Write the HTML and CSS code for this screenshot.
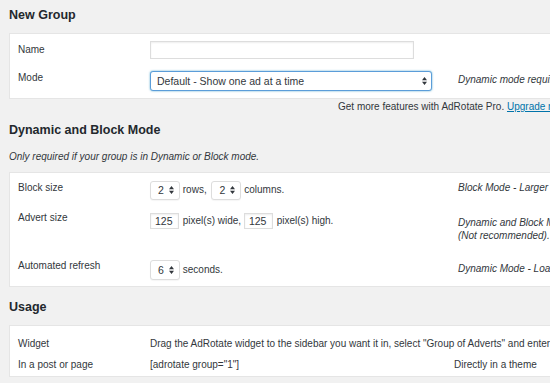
FILE: index.html
```html
<!DOCTYPE html>
<html>
<head>
<meta charset="utf-8">
<link rel="stylesheet" href="styles.css">
</head>
<body>
<h2 class="title">New Group</h2>
<div class="panel p1">
  <div class="row r-name">
    <div class="label">Name</div>
    <div class="field"><span class="input name-input"></span></div>
  </div>
  <div class="row r-mode">
    <div class="label">Mode</div>
    <div class="field"><span class="select mode-select focus"><span class="val">Default - Show one ad at a time</span><svg class="arrows" width="5" height="8" viewBox="0 0 5 8"><path d="M0 3.2L2.5 0L5 3.2Z M0 4.8L2.5 8L5 4.8Z" fill="#32373c"/></svg></span></div>
    <div class="note">Dynamic mode requires you to set at least 2 adverts.</div>
  </div>
</div>
<p class="pro">Get more features with AdRotate Pro. <a href="#">Upgrade now</a>!</p>

<h2 class="title t2">Dynamic and Block Mode</h2>
<p class="intro">Only required if your group is in Dynamic or Block mode.</p>
<div class="panel p2">
  <div class="row r-block">
    <div class="label">Block size</div>
    <div class="field"><span class="select small"><span class="val">2</span><svg class="arrows" width="5" height="8" viewBox="0 0 5 8"><path d="M0 3.2L2.5 0L5 3.2Z M0 4.8L2.5 8L5 4.8Z" fill="#32373c"/></svg></span> rows, <span class="select small s2"><span class="val">2</span><svg class="arrows" width="5" height="8" viewBox="0 0 5 8"><path d="M0 3.2L2.5 0L5 3.2Z M0 4.8L2.5 8L5 4.8Z" fill="#32373c"/></svg></span> columns.</div>
    <div class="note">Block Mode - Larger blocks will degrade your sites performance!</div>
  </div>
  <div class="row r-size">
    <div class="label">Advert size</div>
    <div class="field"><span class="input num">125</span> pixel(s) wide, <span class="input num">125</span> pixel(s) high.</div>
    <div class="note">Dynamic and Block Mode - Define the maximum<br>(Not recommended).</div>
  </div>
  <div class="row r-refresh">
    <div class="label">Automated refresh</div>
    <div class="field"><span class="select small"><span class="val">6</span><svg class="arrows" width="5" height="8" viewBox="0 0 5 8"><path d="M0 3.2L2.5 0L5 3.2Z M0 4.8L2.5 8L5 4.8Z" fill="#32373c"/></svg></span> seconds.</div>
    <div class="note">Dynamic Mode - Load a new advert every x seconds.</div>
  </div>
</div>

<h2 class="title t3">Usage</h2>
<div class="panel p3">
  <div class="row u-row">
    <div class="label">Widget</div>
    <div class="usage">Drag the AdRotate widget to the sidebar you want it in, select "Group of Adverts" and enter the group ID.</div>
  </div>
  <div class="row u-row u2">
    <div class="label">In a post or page</div>
    <div class="code">[adrotate group="1"]</div>
    <div class="usage">Directly in a theme</div>
  </div>
</div>
</body>
</html>
```

FILE: styles.css
```css
* { box-sizing: border-box; }
html, body { margin: 0; }
body {
  background: #f1f1f1;
  font-family: "Liberation Sans", Arial, sans-serif;
  font-size: 10px;
  color: #32373c;
  padding: 7px 0 0 9px;
  width: 550px;
  height: 383px;
  overflow: hidden;
}
.title {
  margin: 0;
  font-size: 12.5px;
  font-weight: bold;
  line-height: 16px;
  color: #23282d;
  white-space: nowrap;
}
.panel {
  background: #fff;
  border: 1px solid #e5e5e5;
  width: 640px;
}
.p1 { margin-top: 10px; }
.row { display: flex; align-items: flex-start; }
.label {
  flex: none;
  width: 140px;
  padding-left: 8px;
  line-height: 16px;
  white-space: nowrap;
}
.field {
  flex: none;
  width: 308px;
  white-space: nowrap;
  line-height: 16px;
}
.note {
  flex: none;
  font-style: italic;
  line-height: 13px;
  white-space: nowrap;
  color: #32373c;
}
.input, .select {
  display: inline-block;
  vertical-align: middle;
  background: #fff;
  border: 1px solid #ddd;
  box-shadow: inset 0 1px 2px rgba(0,0,0,.07);
  position: relative;
  color: #32373c;
}
.name-input { width: 264px; height: 18px; }
.select { border-radius: 3px; box-shadow: 0 1px 1px rgba(0,0,0,.04); }
.select .val { display: block; padding-left: 6px; }
.arrows { position: absolute; top: 50%; margin-top: -4px; }
.mode-select { width: 282px; height: 20px; line-height: 18px; font-size: 10.5px; }
.mode-select .arrows { right: 4px; }
.focus { border-color: #5b9dd9; box-shadow: 0 0 2px rgba(30,140,190,.8); }
.small { width: 30px; height: 19px; line-height: 17px; font-size: 10.5px; }
.small .arrows { right: 5px; }
.small .val { padding-left: 7px; }
.s2 { margin-left: 2px; }
.num { width: 29px; height: 16px; line-height: 14px; padding-left: 4px; font-size: 10.5px; margin-right: 1px; }

.r-name { height: 30px; }
.r-name .label { padding-top: 8px; }
.r-name .field { padding-top: 7px; }
.r-mode { height: 34px; }
.r-mode .label { padding-top: 6px; }
.r-mode .field { padding-top: 7px; }
.r-mode .note { padding-top: 8.5px; }

.pro {
  margin: 0;
  padding-left: 329px;
  line-height: 16px;
  white-space: nowrap;
}
.pro a { color: #0073aa; }

.t2 { margin-top: 7px; }
.intro {
  margin: 12px 0 0;
  font-style: italic;
  line-height: 14px;
  white-space: nowrap;
}
.p2 { margin-top: 8px; }
.r-block { height: 33px; }
.r-block .label { padding-top: 7px; }
.r-block .field { padding-top: 7px; line-height: 19px; }
.r-block .note { padding-top: 7.5px; }
.r-size { height: 44px; }
.r-size .label { padding-top: 4px; }
.r-size .field { padding-top: 7px; line-height: 16px; }
.r-size .note { padding-top: 9.5px; }
.r-refresh { height: 36px; }
.r-refresh .label { padding-top: 8px; }
.r-refresh .field { padding-top: 10px; line-height: 20px; }
.r-refresh .note { padding-top: 11.5px; }
.r-refresh .small { height: 20px; line-height: 18px; }

.t3 { margin-top: 12px; }
.p3 { margin-top: 10px; padding: 10px 0 3px; }
.u-row { line-height: 16px; white-space: nowrap; }
.u2 { margin-top: 5px; }
.code { flex: none; width: 304px; }
```
